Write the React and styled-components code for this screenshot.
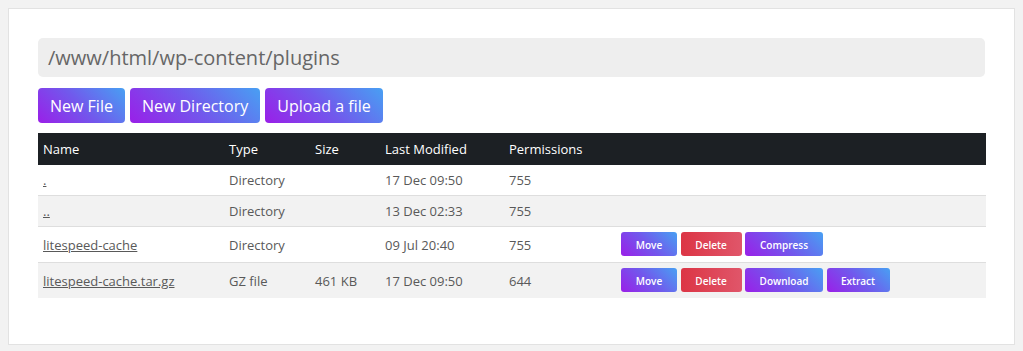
import React from "react";
import styled, { createGlobalStyle } from "styled-components";

const Global = createGlobalStyle`
  html, body { margin: 0; padding: 0; }
  body {
    background: #f2f2f2;
    font-family: "Open Sans", "Noto Sans", sans-serif;
    padding: 8px;
  }
`;

const Card = styled.div`
  background: #fff;
  border: 1px solid #e2e2e2;
  padding: 29px 29px 46px;
`;

const PathBar = styled.div`
  height: 39px;
  background: #eeeeee;
  border-radius: 5px;
  display: flex;
  align-items: center;
  padding: 0 10px;
  font-size: 20px;
  color: #666;
  box-sizing: border-box;
`;

const Toolbar = styled.div`
  display: flex;
  gap: 5px;
  margin: 11px 0 10px;
`;

const gradient = `linear-gradient(45deg, #9a1fe8 0%, #7159ec 50%, #48a0f3 100%)`;

const BigButton = styled.button`
  height: 35px;
  padding: 0 12px;
  border: none;
  border-radius: 4px;
  background: ${gradient};
  color: #fff;
  font-family: "Open Sans", sans-serif;
  font-size: 16px;
  cursor: pointer;
`;

const Table = styled.table`
  width: 948px;
  border-collapse: collapse;
  table-layout: fixed;
  font-size: 13px;
  color: #595959;
`;

const Head = styled.th`
  background: #1c2024;
  color: #fff;
  font-weight: 400;
  text-align: left;
  height: 32px;
  padding: 0 5px;
  width: ${(p) => p.$w || "auto"};
`;

const Row = styled.tr`
  background: ${(p) => (p.$alt ? "#f2f2f2" : "#fff")};
  border-top: ${(p) => (p.$first ? "none" : "1px solid #dedede")};
`;

const Cell = styled.td`
  padding: 5px 5px;
  height: ${(p) => (p.$tall ? "25px" : "20px")};
  line-height: 20px;
  vertical-align: middle;
  white-space: nowrap;
`;

const NameLink = styled.a`
  color: #595959;
  text-decoration: underline;
`;

const Actions = styled.div`
  display: flex;
  gap: 3.5px;
  padding-left: 1px;
  padding-bottom: 1px;
`;

const SmallButton = styled.button`
  height: 24px;
  padding: 1px 14px 0;
  min-width: ${(p) => p.$min || "0"};
  border: none;
  border-radius: 3px;
  background: ${(p) =>
    p.$danger ? "linear-gradient(90deg, #dc3545, #e0566a)" : gradient};
  color: #fff;
  font-family: "Open Sans", sans-serif;
  font-size: 10px;
  font-weight: 600;
  cursor: pointer;
`;

const rows = [
  { name: ".", type: "Directory", size: "", mod: "17 Dec 09:50", perm: "755", actions: [] },
  { name: "..", type: "Directory", size: "", mod: "13 Dec 02:33", perm: "755", actions: [] },
  { name: "litespeed-cache", type: "Directory", size: "", mod: "09 Jul 20:40", perm: "755", actions: ["Move", "Delete", "Compress"] },
  { name: "litespeed-cache.tar.gz", type: "GZ file", size: "461 KB", mod: "17 Dec 09:50", perm: "644", actions: ["Move", "Delete", "Download", "Extract"] },
];

const widths = { Move: "56px", Delete: "61px", Compress: "78px", Download: "78px", Extract: "63px" };

export default function App() {
  return (
    <>
      <Global />
      <Card>
        <PathBar>/www/html/wp-content/plugins</PathBar>
        <Toolbar>
          <BigButton>New File</BigButton>
          <BigButton>New Directory</BigButton>
          <BigButton>Upload a file</BigButton>
        </Toolbar>
        <Table>
          <thead>
            <tr>
              <Head $w="176px">Name</Head>
              <Head $w="76px">Type</Head>
              <Head $w="60px">Size</Head>
              <Head $w="114px">Last Modified</Head>
              <Head $w="101px">Permissions</Head>
              <Head></Head>
            </tr>
          </thead>
          <tbody>
            {rows.map((r, i) => (
              <Row key={r.name} $alt={i % 2 === 1} $first={i === 0}>
                <Cell $tall={r.actions.length > 0}>
                  <NameLink href="#">{r.name}</NameLink>
                </Cell>
                <Cell>{r.type}</Cell>
                <Cell>{r.size}</Cell>
                <Cell>{r.mod}</Cell>
                <Cell>{r.perm}</Cell>
                <Cell>
                  {r.actions.length > 0 && (
                    <Actions>
                      {r.actions.map((a) => (
                        <SmallButton key={a} $danger={a === "Delete"} $min={widths[a]}>
                          {a}
                        </SmallButton>
                      ))}
                    </Actions>
                  )}
                </Cell>
              </Row>
            ))}
          </tbody>
        </Table>
      </Card>
    </>
  );
}
